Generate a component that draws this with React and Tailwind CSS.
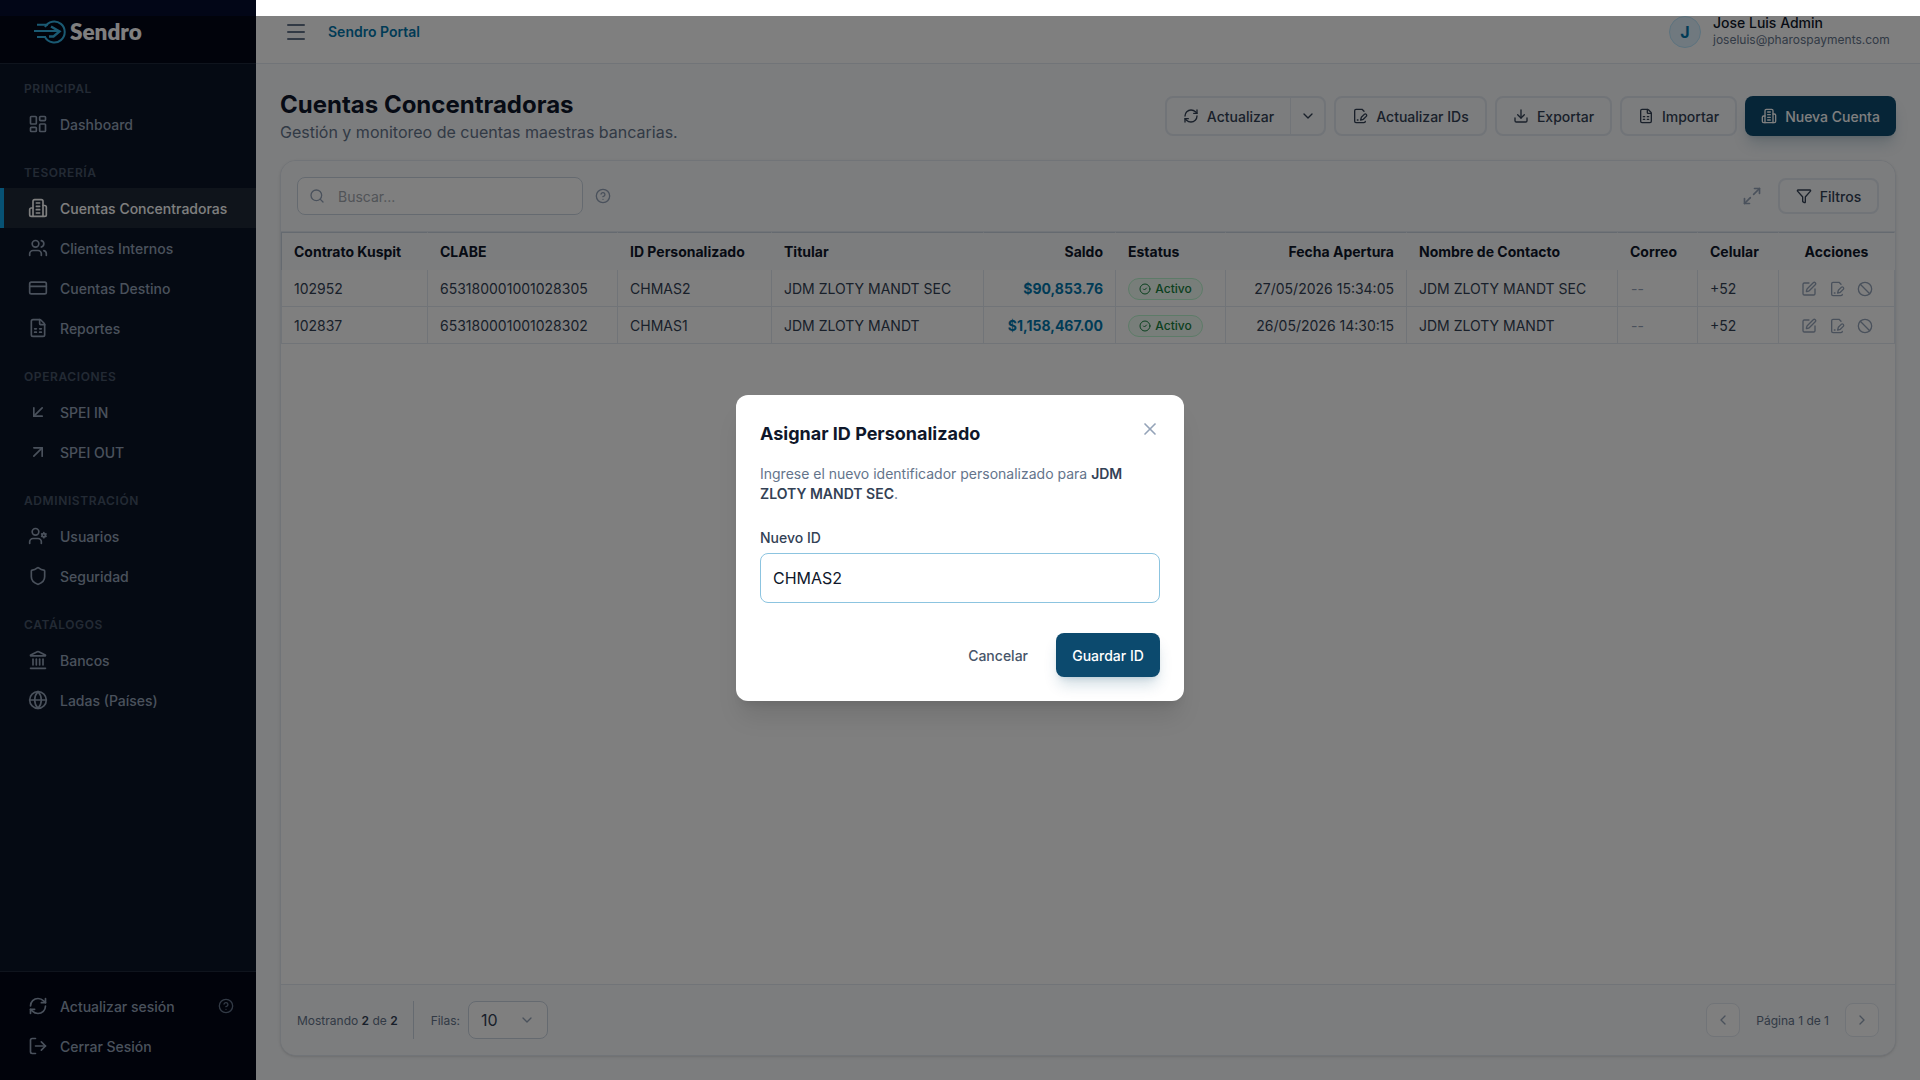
import React, { useState } from "react";
import {
  ArrowDownLeft,
  ArrowUpRight,
  Ban,
  ChevronDown,
  ChevronLeft,
  ChevronRight,
  CircleCheck,
  CircleQuestionMark,
  CreditCard,
  Download,
  FileSpreadsheet,
  Funnel,
  Globe,
  Landmark,
  LayoutDashboard,
  LogOut,
  Maximize2,
  Menu,
  RefreshCw,
  Search,
  Shield,
  SquarePen,
  Users,
  X,
} from "lucide-react";

// Own line icons, same 24px grid as lucide
function LineIcon({ className, strokeWidth = 2, children }) {
  return (
    <svg viewBox="0 0 24 24" fill="none" stroke="currentColor" strokeWidth={strokeWidth} strokeLinecap="round" strokeLinejoin="round" className={className}>
      {children}
    </svg>
  );
}

function UserGear(props) {
  return (
    <LineIcon {...props}>
      <circle cx="9" cy="7" r="4" />
      <path d="M2 21v-2a4 4 0 0 1 4-4h6a4 4 0 0 1 4 4v2" />
      <circle cx="19" cy="11" r="2" />
      <path d="M19 8v1M19 13v1M21.6 9.5l-.87.5M17.27 12l-.87.5M21.6 12.5l-.87-.5M17.27 10l-.87-.5" />
    </LineIcon>
  );
}

function Tower(props) {
  return (
    <LineIcon {...props}>
      <path d="M6 22V4a2 2 0 0 1 2-2h8a2 2 0 0 1 2 2v18Z" />
      <path d="M6 12H4a2 2 0 0 0-2 2v6a2 2 0 0 0 2 2h2" />
      <path d="M18 9h2a2 2 0 0 1 2 2v9a2 2 0 0 1-2 2h-2" />
      <path d="M10 6h4M10 10h4M10 14h4M10 18h4" />
    </LineIcon>
  );
}

function FilePen(props) {
  return (
    <LineIcon {...props}>
      <path d="m18 5-3-3H6a2 2 0 0 0-2 2v16a2 2 0 0 0 2 2h12a2 2 0 0 0 2-2" />
      <path d="M8 18h1" />
      <path d="M18.4 9.6a2 2 0 0 1 3 3L17 17l-4 1 1-4Z" />
    </LineIcon>
  );
}

function Logo() {
  return (
    <div className="flex items-center gap-1">
      <svg viewBox="0 0 33 24" fill="none" stroke="#35b4e6" strokeWidth="2" className="h-6 w-[33px]">
        <path d="M12 7A10.500 10.500 0 1 1 12 17" />
        <path d="M4 4.700h11M1 11h25M4 17h9" />
        <path d="m18 6.500 8.500 5-6 5h-4.500" strokeWidth="2.400" />
      </svg>
      <span className="font-['Lato',sans-serif] text-[22.5px] leading-6 font-extrabold text-white">Sendro</span>
    </div>
  );
}

const sections = [
  { title: "Principal", items: [{ label: "Dashboard", icon: LayoutDashboard }] },
  {
    title: "Tesorería",
    items: [
      { label: "Cuentas Concentradoras", icon: Tower, active: true },
      { label: "Clientes Internos", icon: Users },
      { label: "Cuentas Destino", icon: CreditCard },
      { label: "Reportes", icon: FileSpreadsheet },
    ],
  },
  {
    title: "Operaciones",
    items: [
      { label: "SPEI IN", icon: ArrowDownLeft },
      { label: "SPEI OUT", icon: ArrowUpRight },
    ],
  },
  {
    title: "Administración",
    items: [
      { label: "Usuarios", icon: UserGear },
      { label: "Seguridad", icon: Shield },
    ],
  },
  {
    title: "Catálogos",
    items: [
      { label: "Bancos", icon: Landmark },
      { label: "Ladas (Países)", icon: Globe },
    ],
  },
];

const accounts = [
  {
    contrato: "102952",
    clabe: "653180001001028305",
    id: "CHMAS2",
    titular: "JDM ZLOTY MANDT SEC",
    saldo: "$90,853.76",
    fecha: "27/05/2026 15:34:05",
  },
  {
    contrato: "102837",
    clabe: "653180001001028302",
    id: "CHMAS1",
    titular: "JDM ZLOTY MANDT",
    saldo: "$1,158,467.00",
    fecha: "26/05/2026 14:30:15",
  },
];

function NavItem({ item }) {
  const Icon = item.icon;
  return (
    <a
      className={`flex h-10 items-center gap-3 border-l-4 pl-6 text-sm font-medium ${
        item.active ? "border-[#0ea5e9] bg-[#1e2937] text-white" : "border-transparent text-[#94a3b8]"
      }`}
    >
      <Icon className="size-5" strokeWidth={2} />
      <span className="pt-px">{item.label}</span>
    </a>
  );
}

function Sidebar() {
  return (
    <aside className="flex w-64 shrink-0 flex-col bg-[#0b1426]">
      <div className="flex h-16 shrink-0 items-center border-b border-[#1e293b] bg-[#020617] pl-[33px]">
        <Logo />
      </div>
      <nav className="flex-1 pt-4">
        {sections.map((section) => (
          <div key={section.title} className="mb-5">
            <h3 className="pt-px pl-6 text-xs leading-[15px] font-semibold tracking-wider text-[#475569] uppercase">{section.title}</h3>
            <div className="mt-2">
              {section.items.map((item) => (
                <NavItem key={item.label} item={item} />
              ))}
            </div>
          </div>
        ))}
      </nav>
      <div className="h-[109px] border-t border-[#1e293b] bg-[#020617] pt-[14px] text-[#94a3b8]">
        <div className="flex items-center pr-[22px]">
          <div className="flex-1">
            <NavItem item={{ label: "Actualizar sesión", icon: RefreshCw }} />
          </div>
          <CircleQuestionMark className="size-4 text-[#64748b]" strokeWidth={2} />
        </div>
        <NavItem item={{ label: "Cerrar Sesión", icon: LogOut }} />
      </div>
    </aside>
  );
}

function TopBar() {
  return (
    <header className="flex h-16 shrink-0 items-center border-b border-[#e2e8f0] bg-white pr-[30px] pl-7">
      <Menu className="size-6 text-[#64748b]" strokeWidth={2} />
      <span className="ml-5 text-sm font-semibold text-[#0277ad]">Sendro Portal</span>
      <div className="ml-auto flex items-center gap-3">
        <div className="flex size-8 items-center justify-center rounded-full border border-[#bae6fd] bg-[#e0f2fe] text-base font-bold text-[#0277ad]">J</div>
        <div className="w-[177px] pb-px">
          <p className="text-sm leading-[17px] font-medium text-[#0f172a]">Jose Luis Admin</p>
          <p className="text-xs leading-[17px] text-[#64748b]">joseluis@pharospayments.com</p>
        </div>
      </div>
    </header>
  );
}

function ToolButton({ icon: Icon, children, className }) {
  return (
    <button className={`flex items-center justify-center gap-2 rounded-lg border-2 border-[#e2e8f0] text-sm font-medium text-[#334155] ${className}`}>
      <Icon className="size-4" strokeWidth={2} />
      <span className="pt-px">{children}</span>
    </button>
  );
}

function PageHeader() {
  return (
    <div className="flex items-center justify-between">
      <div>
        <h1 className="pt-px text-2xl leading-[31px] font-bold text-[#0f172a]">Cuentas Concentradoras</h1>
        <p className="text-base leading-6 text-[#64748b]">Gestión y monitoreo de cuentas maestras bancarias.</p>
      </div>
      <div className="flex gap-2">
        <div className="flex h-10 w-[161px] rounded-lg border-2 border-[#e2e8f0] text-sm font-medium text-[#334155]">
          <button className="flex flex-1 items-center justify-center gap-2">
            <RefreshCw className="size-4" strokeWidth={2} />
            <span className="pt-px">Actualizar</span>
          </button>
          <button className="flex w-[34px] items-center justify-center border-l border-[#e2e8f0]">
            <ChevronDown className="size-4" strokeWidth={2} />
          </button>
        </div>
        <ToolButton icon={FilePen} className="h-10 w-[153px]">Actualizar IDs</ToolButton>
        <ToolButton icon={Download} className="h-10 w-[117px]">Exportar</ToolButton>
        <ToolButton icon={FileSpreadsheet} className="h-10 w-[117px]">Importar</ToolButton>
        <button className="flex h-10 w-[151px] items-center justify-center gap-2 rounded-lg bg-[#0c4a6e] text-sm font-medium text-white shadow-lg shadow-[#0c4a6e]/20">
          <Tower className="size-4" strokeWidth={2} />
          <span className="pt-px">Nueva Cuenta</span>
        </button>
      </div>
    </div>
  );
}

const th = "h-[38px] border-t border-r border-t-[#cbd5e1] border-r-transparent px-3 font-bold text-[#0f172a] first:border-l first:border-l-[#cbd5e1]";
const td = "h-[37px] border-r border-b border-[#e2e8f0] px-3 pt-px first:border-l";

function AccountsTable() {
  return (
    <table className="w-full table-fixed border-separate border-spacing-0 text-left text-sm whitespace-nowrap text-[#334155]">
      <colgroup>
        <col className="w-[147px]" />
        <col className="w-[190px]" />
        <col className="w-[154px]" />
        <col className="w-[212px]" />
        <col className="w-[132px]" />
        <col className="w-[110px]" />
        <col className="w-[181px]" />
        <col className="w-[211px]" />
        <col className="w-[80px]" />
        <col className="w-[81px]" />
        <col className="w-[116px]" />
      </colgroup>
      <thead>
        <tr className="bg-[#f8fafc]">
          <th className={th}>Contrato Kuspit</th>
          <th className={th}>CLABE</th>
          <th className={th}>ID Personalizado</th>
          <th className={th}>Titular</th>
          <th className={`${th} text-right`}>Saldo</th>
          <th className={th}>Estatus</th>
          <th className={`${th} text-right`}>Fecha Apertura</th>
          <th className={th}>Nombre de Contacto</th>
          <th className={th}>Correo</th>
          <th className={th}>Celular</th>
          <th className={`${th} text-center`}>Acciones</th>
        </tr>
      </thead>
      <tbody>
        {accounts.map((row) => (
          <tr key={row.contrato}>
            <td className={td}>{row.contrato}</td>
            <td className={td}>{row.clabe}</td>
            <td className={td}>{row.id}</td>
            <td className={td}>{row.titular}</td>
            <td className={`${td} text-right font-bold text-[#0277ad]`}>{row.saldo}</td>
            <td className={td}>
              <span className="flex h-[22px] w-[75px] items-center justify-center gap-1 rounded-full border border-[#bbf7d0] bg-[#f0fdf4] text-xs font-medium text-[#15803d]">
                <CircleCheck className="size-3" strokeWidth={2} />
                <span className="pt-px">Activo</span>
              </span>
            </td>
            <td className={`${td} text-right`}>{row.fecha}</td>
            <td className={td}>{row.titular}</td>
            <td className={`${td} pl-[13px] text-[#94a3b8]`}>--</td>
            <td className={td}>+52</td>
            <td className={td}>
              <div className="flex items-center justify-center gap-3 text-[#94a3b8]">
                <SquarePen className="size-4" strokeWidth={2} />
                <FilePen className="size-4" strokeWidth={2} />
                <Ban className="size-4" strokeWidth={2} />
              </div>
            </td>
          </tr>
        ))}
      </tbody>
    </table>
  );
}

function AccountsCard() {
  return (
    <section className="mt-4 flex flex-1 flex-col overflow-hidden rounded-2xl border border-[#e2e8f0] bg-white shadow-sm">
      <div className="flex h-[71px] shrink-0 items-center border-b border-[#e2e8f0] bg-[#f8fafc] px-4">
        <label className="flex h-[38px] w-[286px] items-center gap-[13px] rounded-lg border border-[#cbd5e1] bg-white px-[11px]">
          <Search className="size-4 shrink-0 text-[#94a3b8]" strokeWidth={2} />
          <input placeholder="Buscar..." className="w-full pt-px text-sm outline-none placeholder:text-[#a3a8b0]" />
        </label>
        <CircleQuestionMark className="ml-3 size-4 text-[#94a3b8]" strokeWidth={2} />
        <Maximize2 className="ml-auto size-5 text-[#94a3b8]" strokeWidth={2} />
        <ToolButton icon={Funnel} className="ml-4 h-9 w-[101px]">Filtros</ToolButton>
      </div>
      <AccountsTable />
      <div className="mt-auto flex h-[71px] shrink-0 items-center border-t border-[#e2e8f0] bg-[#f8fafc] px-4 text-xs text-[#64748b]">
        <span className="pt-px">
          Mostrando <b className="font-semibold text-[#334155]">2</b> de <b className="font-semibold text-[#334155]">2</b>
        </span>
        <div className="mr-[17px] ml-[15px] h-[38px] w-px bg-[#cbd5e1]" />
        <span className="pt-px">Filas:</span>
        <div className="ml-2 flex h-[38px] w-20 items-center justify-between rounded-lg border border-[#cbd5e1] bg-white px-3 text-base text-[#334155]">
          10
          <ChevronDown className="size-4 text-[#94a3b8]" strokeWidth={2} />
        </div>
        <div className="ml-auto flex items-center gap-4">
          <button className="flex size-[34px] items-center justify-center rounded-lg border border-[#e2e8f0] bg-white text-[#94a3b8]">
            <ChevronLeft className="size-4" strokeWidth={2} />
          </button>
          <span className="pt-px">Página 1 de 1</span>
          <button className="flex size-[34px] items-center justify-center rounded-lg border border-[#e2e8f0] bg-white text-[#94a3b8]">
            <ChevronRight className="size-4" strokeWidth={2} />
          </button>
        </div>
      </div>
    </section>
  );
}

function AssignIdDialog() {
  const [value, setValue] = useState("CHMAS2");

  return (
    <div className="h-[306px] w-[448px] rounded-xl bg-white p-6 shadow-xl">
      <div className="flex items-start justify-between">
        <h2 className="pt-px text-lg leading-7 font-bold text-[#0f172a]">Asignar ID Personalizado</h2>
        <button className="text-[#94a3b8]">
          <X className="size-5" strokeWidth={2} />
        </button>
      </div>
      <p className="mt-4 text-sm leading-5 text-[#64748b]">
        Ingrese el nuevo identificador personalizado para <strong className="font-semibold text-[#334155]">JDM ZLOTY MANDT SEC</strong>.
      </p>
      <label className="mt-6 block text-sm leading-5 font-medium text-[#334155]">Nuevo ID</label>
      <input
        value={value}
        onChange={(e) => setValue(e.target.value)}
        className="mt-[5px] h-[50px] w-full rounded-lg border border-[#8cc4e0] px-3 text-base text-[#0f172a] outline-none"
      />
      <div className="mt-[30px] flex justify-end gap-3">
        <button className="h-11 px-4 pt-px text-sm font-medium text-[#475569]">Cancelar</button>
        <button className="h-11 w-[104px] rounded-lg bg-[#0c4a6e] pt-px text-sm font-medium text-white shadow-lg shadow-[#0c4a6e]/20">
          Guardar ID
        </button>
      </div>
    </div>
  );
}

export default function App() {
  return (
    <div className="relative flex h-[1080px] w-[1920px] overflow-hidden bg-[#f8fafc] font-['Inter',sans-serif]">
      <Sidebar />
      <main className="flex min-w-0 flex-1 flex-col">
        <TopBar />
        <div className="flex flex-1 flex-col px-6 pt-6 pb-6">
          <PageHeader />
          <AccountsCard />
        </div>
      </main>
      {/* Modal backdrop starts below the top strip of the window */}
      <div className="absolute inset-x-0 top-4 bottom-0 bg-black/50" />
      <div className="absolute inset-0 flex items-center justify-center pt-4">
        <AssignIdDialog />
      </div>
    </div>
  );
}
